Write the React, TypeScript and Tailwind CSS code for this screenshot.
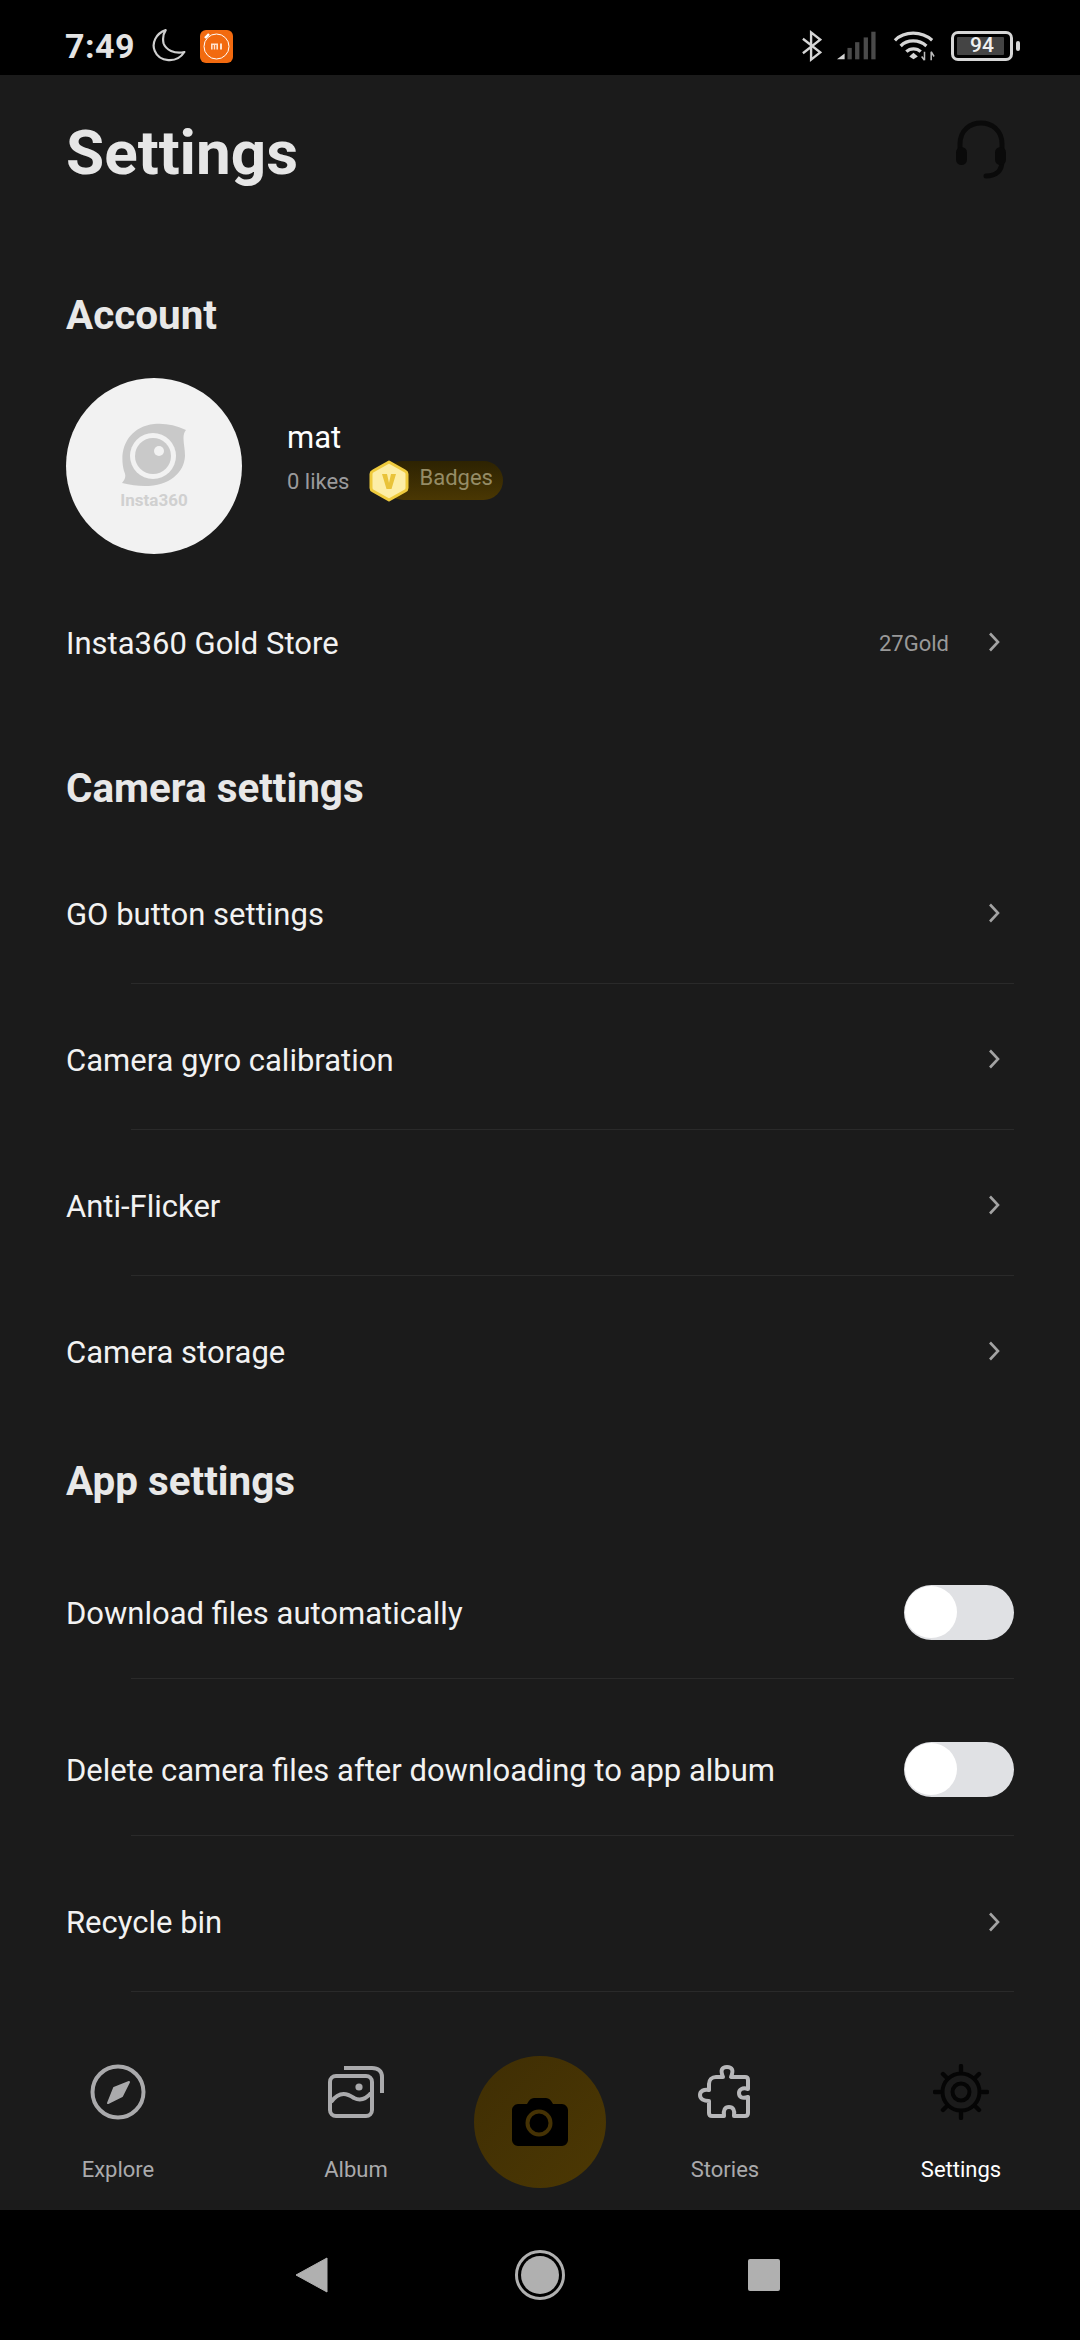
function Chevron() {
    return (
        <svg width="14" height="22" viewBox="0 0 14 22" fill="none" className="shrink-0">
            <path d="M3 2.5 L11 11 L3 19.5" stroke="#a3a3a3" strokeWidth="2.6" />
        </svg>
    );
}

function Toggle() {
    return (
        <div className="w-[110px] h-[55px] rounded-full bg-[#e0e1e4] flex items-center pl-[1px]">
            <div className="w-[52px] h-[52px] rounded-full bg-white" />
        </div>
    );
}

function SectionTitle({ children, className }: { children: string; className: string }) {
    return <h2 className={`text-[40.4px] leading-[46px] font-bold text-[#e8e8e8] pl-[66px] ${className}`}>{children}</h2>;
}

function Row({ label, className, toggle = false, divider = true }: { label: string; className: string; toggle?: boolean; divider?: boolean }) {
    return (
        <div className={`relative flex items-center justify-between pl-[66px] pr-[66px] text-[31px] text-[#f2f2f2] ${className}`}>
            <span className="pt-[4px]">{label}</span>
            {toggle ? <Toggle /> : <div className="pr-[13px]"><Chevron /></div>}
            {divider && <div className="absolute left-[131px] right-[66px] -bottom-[1px] h-[1px] bg-[#2a2a2a]" />}
        </div>
    );
}

function StatusBar() {
    return (
        <div className="h-[75px] bg-black flex items-center justify-between pt-[17px] pl-[65px] pr-[60px] shrink-0">
            <div className="flex items-center">
                <span className="text-[34px] font-bold text-[#e4e4e4] tracking-[0.5px]">7:49</span>
                <svg width="34" height="34" viewBox="2 1 30 31" fill="none" className="ml-[17px]">
                    <path d="M14 2 C5 5 1 14 4 21 C8 31 24 33 31 22 C22 24 14 20 12 14 C11 9 12 5 14 2 Z" stroke="#cfcfcf" strokeWidth="2" strokeLinejoin="round" />
                </svg>
                <svg width="33" height="33" viewBox="0 0 33 33" className="ml-[14px]">
                    <rect width="33" height="33" rx="6" fill="#f26a0f" />
                    <circle cx="16.5" cy="16.5" r="12.5" fill="none" stroke="#fff" strokeWidth="1" />
                    <path d="M5 8 L9 4" stroke="#fff" strokeWidth="2.4" />
                    <path d="M11 13.5 H18 V19.5 H16.4 V15 H15.2 V19.5 H13.8 V15 H12.6 V19.5 H11 Z" fill="#ffe3cf" />
                    <rect x="20" y="13.5" width="2" height="6" fill="#ffe3cf" />
                </svg>
            </div>
            <div className="flex items-center">
                <svg width="20" height="34" viewBox="0 0 22 34" fill="none" stroke="#d6d6d6" strokeWidth="2.6">
                    <path d="M1 9 L20 24 L10 32 L10 2 L20 10 L1 25" />
                </svg>
                <svg width="40" height="30" viewBox="0 0 42 30" className="ml-[15px]">
                    <path d="M0 29 L8 23 L8 29 Z" fill="#d6d6d6" />
                    <rect x="11" y="17" width="4.5" height="12" fill="#4a4a4a" />
                    <rect x="19" y="11" width="4.5" height="18" fill="#4a4a4a" />
                    <rect x="28" y="6" width="4.5" height="23" fill="#4a4a4a" />
                    <rect x="36" y="0" width="4.5" height="29" fill="#4a4a4a" />
                </svg>
                <svg width="42" height="32" viewBox="0 0 44 32" fill="none" className="ml-[16px]">
                    <path d="M2 10 C12 0 30 0 41 10" stroke="#d6d6d6" strokeWidth="3.4" />
                    <path d="M8 16 C15 9 27 9 35 16" stroke="#d6d6d6" strokeWidth="3.4" />
                    <path d="M14 22 C18 18 25 18 29 22" stroke="#d6d6d6" strokeWidth="3.4" />
                    <path d="M17 27 L21.5 23 L26 27 L21.5 30 Z" fill="#d6d6d6" />
                    <path d="M33 22 L33 31 M30 27 L33 31 M40 31 L40 22 M40 22 L43 27" stroke="#bdbdbd" strokeWidth="1.6" />
                </svg>
                <div className="relative ml-[16px] w-[62px] h-[30px] rounded-[7px] border-[3px] border-[#d6d6d6] p-[3px]">
                    <div className="h-full w-[93%] bg-[#444] rounded-[1px]" />
                    <span className="absolute inset-0 flex items-center justify-center text-[21px] font-medium text-[#f0f0f0]">94</span>
                </div>
                <div className="ml-[3px] w-[4px] h-[10px] rounded-[2px] bg-[#d6d6d6]" />
            </div>
        </div>
    );
}

function TabItem({ label, active = false, children }: { label: string; active?: boolean; children: React.ReactNode }) {
    return (
        <div className="w-[120px] flex flex-col items-center">
            <div className="h-[54px] flex items-center justify-center">{children}</div>
            <span className={`mt-[37px] text-[22px] leading-[28px] ${active ? "text-white" : "text-[#aaaaac]"}`}>{label}</span>
        </div>
    );
}

export default function App() {
    return (
        <div className="w-[1080px] h-[2340px] bg-[#1b1b1b] flex flex-col overflow-hidden" style={{ fontFamily: "Roboto, sans-serif" }}>
            <StatusBar />

            <div className="flex-1 relative flex flex-col">
                {/* Header */}
                <div className="flex items-center justify-between pl-[66px] pr-[74px] h-[76px] mt-[39px]">
                    <h1 className="text-[62px] font-bold text-[#e6e6e6]">Settings</h1>
                    <svg width="50" height="60" viewBox="0 0 50 60" fill="none" className="-mt-[6px]">
                        <path d="M4 34 V25 C4 -3 46 -3 46 25 V42 C46 52 40 57 30 57" stroke="#0a0a0a" strokeWidth="5" strokeLinecap="round" />
                        <rect x="0" y="28" width="11" height="18" rx="5.5" fill="#0a0a0a" />
                        <rect x="39" y="28" width="11" height="18" rx="5.5" fill="#0a0a0a" />
                    </svg>
                </div>

                {/* Account */}
                <SectionTitle className="mt-[103px]">Account</SectionTitle>
                <div className="flex items-center pl-[66px] mt-[39px]">
                    <div className="w-[176px] h-[176px] rounded-full bg-[#f2f2f2] flex flex-col items-center pt-[45px] shrink-0">
                        <svg width="66" height="66" viewBox="0 0 66 66">
                            <path d="M33 1 C44 0 54 2 65 7 C60 13 64 22 64 33 C63 54 40 70 1 60 C5 55 5 52 3 48 C-3 25 8 4 33 1 Z" fill="#c9c9c9" />
                            <circle cx="32" cy="33" r="23" fill="#f2f2f2" />
                            <circle cx="32" cy="33" r="18" fill="#c9c9c9" />
                            <circle cx="38" cy="28" r="5" fill="#f2f2f2" />
                        </svg>
                        <span className="mt-[2px] text-[17px] leading-[18px] font-bold text-[#d0d0d0]">Insta360</span>
                    </div>
                    <div className="ml-[45px] -mt-[13px]">
                        <div className="text-[31px] leading-[36px] text-white">mat</div>
                        <div className="flex items-center mt-[7px]">
                            <span className="text-[22px] text-[#9a9a9c]">0 likes</span>
                            <div className="relative ml-[20px] -mt-[2px] w-[134px] h-[39px]">
                                <div className="absolute left-[15px] right-0 inset-y-0 rounded-full bg-gradient-to-b from-[#2d2302] to-[#4a3703] flex items-center pl-[35px]">
                                    <span className="text-[22px] text-[#958c66] -mt-[6px]">Badges</span>
                                </div>
                                <svg width="40" height="42" viewBox="0 0 40 42" className="absolute left-0 -top-[1px]">
                                    <path d="M20 2 L36 11 Q38 12 38 14 V28 Q38 30 36 31 L20 40 L4 31 Q2 30 2 28 V14 Q2 12 4 11 Z" fill="#fdeea6" stroke="#efcb3d" strokeWidth="3" strokeLinejoin="round" />
                                    <path d="M13 14 H18 L20 23 L22 14 H27 L22.5 29 H17.5 Z" fill="#e9c33a" />
                                </svg>
                            </div>
                        </div>
                    </div>
                </div>

                <div className="flex items-center justify-between pl-[66px] pr-[79px] h-[176px] text-[31px] text-[#f2f2f2]">
                    <span className="pt-[4px]">Insta360 Gold Store</span>
                    <div className="flex items-center">
                        <span className="text-[22px] text-[#999999] mr-[38px] pt-[2px]">27Gold</span>
                        <Chevron />
                    </div>
                </div>

                {/* Camera settings */}
                <SectionTitle className="mt-[36px]">Camera settings</SectionTitle>
                <div className="mt-[25px]">
                    <Row label="GO button settings" className="h-[146px] pt-[6px]" />
                    <Row label="Camera gyro calibration" className="h-[146px] pt-[6px]" />
                    <Row label="Anti-Flicker" className="h-[146px] pt-[6px]" />
                    <Row label="Camera storage" className="h-[146px] pt-[6px]" divider={false} />
                </div>

                {/* App settings */}
                <SectionTitle className="mt-[38px]">App settings</SectionTitle>
                <div className="mt-[16px]">
                    <Row label="Download files automatically" className="h-[157px] pt-[25px]" toggle />
                    <Row label="Delete camera files after downloading to app album" className="h-[157px] pt-[25px]" toggle />
                    <Row label="Recycle bin" className="h-[156px] pt-[17px]" />
                </div>

                {/* Tab bar */}
                <div className="absolute left-0 right-0 bottom-[130px] h-[145px] flex items-start pl-[58px] pr-[59px] justify-between">
                    <div className="flex gap-[118px]">
                        <TabItem label="Explore">
                            <svg width="56" height="56" viewBox="0 0 56 56" fill="none">
                                <circle cx="28" cy="28" r="25.5" stroke="#aaaaac" strokeWidth="4" />
                                <path d="M39 18 L32 32 L18 39 L24 24 Z" fill="#aaaaac" stroke="#aaaaac" strokeWidth="2" strokeLinejoin="round" />
                            </svg>
                        </TabItem>
                        <TabItem label="Album">
                            <svg width="56" height="54" viewBox="0 0 56 54" fill="none" stroke="#aaaaac" strokeWidth="4">
                                <path d="M16 3 H44 C50 3 54 6 54 12 V28" />
                                <rect x="2" y="11" width="42" height="40" rx="6" />
                                <path d="M3 37 C12 25 20 29 26 33 C32 36 38 34 43 28" />
                                <circle cx="31" cy="22" r="3.6" fill="#aaaaac" stroke="none" />
                            </svg>
                        </TabItem>
                    </div>
                    <div className="flex gap-[116px]">
                        <TabItem label="Stories">
                            <svg width="54" height="54" viewBox="0 0 54 54" fill="none">
                                <path d="M18 12 H25 C22 5 24 2 29 2 C34 2 36 5 33 12 H47 C49 12 50 13 50 15 V24 C44 22 41 25 41 28 C41 32 44 34 50 32 V48 C50 50 49 51 47 51 H36 C37 45 35 42 31 42 C27 42 25 45 26 51 H14 C12 51 11 50 11 48 V36 C6 36 2 34 2 30 C2 26 6 24 11 25 V19 C11 15 14 12 18 12 Z" stroke="#b7b7b9" strokeWidth="4" strokeLinejoin="round" />
                            </svg>
                        </TabItem>
                        <TabItem label="Settings" active>
                            <svg width="56" height="56" viewBox="0 0 56 56" fill="none" stroke="#050505">
                                <circle cx="28" cy="28" r="18.5" strokeWidth="4" />
                                <circle cx="28" cy="28" r="8.5" strokeWidth="4" />
                                <path d="M28 2 V7 M28 49 V54 M2 28 H7 M49 28 H54 M10 10 L13 13 M43 43 L46 46 M46 10 L43 13 M13 43 L10 46" strokeWidth="4.4" strokeLinecap="round" />
                            </svg>
                        </TabItem>
                    </div>
                </div>

                {/* Capture button */}
                <div className="absolute left-[474px] bottom-[152px] w-[132px] h-[132px] rounded-full bg-gradient-to-br from-[#3f2e04] to-[#4c3803] flex items-center justify-center">
                    <svg width="56" height="48" viewBox="0 0 56 48">
                        <path d="M6 6 H15 C17 2 19 0 22 0 H34 C37 0 39 2 41 6 H50 C53 6 56 9 56 12 V42 C56 45 53 48 50 48 H6 C3 48 0 45 0 42 V12 C0 9 3 6 6 6 Z" fill="#000" />
                        <circle cx="27" cy="25" r="11.5" fill="none" stroke="#453204" strokeWidth="4" />
                    </svg>
                </div>

                {/* Android nav */}
                <div className="absolute left-0 right-0 bottom-0 h-[130px] bg-black flex items-center justify-center pr-[5px]">
                    <svg width="33" height="36" viewBox="0 0 33 36" className="mr-[171px]">
                        <path d="M32 1 V35 L1 18 Z" fill="#b0b0b0" stroke="#b0b0b0" strokeWidth="1" strokeLinejoin="round" />
                    </svg>
                    <div className="w-[50px] h-[50px] rounded-full border-[3px] border-[#b0b0b0] p-[3px] mx-[16px]">
                        <div className="w-full h-full rounded-full bg-[#b0b0b0]" />
                    </div>
                    <div className="w-[32px] h-[32px] rounded-[2px] bg-[#b0b0b0] ml-[167px]" />
                </div>
            </div>
        </div>
    );
}
